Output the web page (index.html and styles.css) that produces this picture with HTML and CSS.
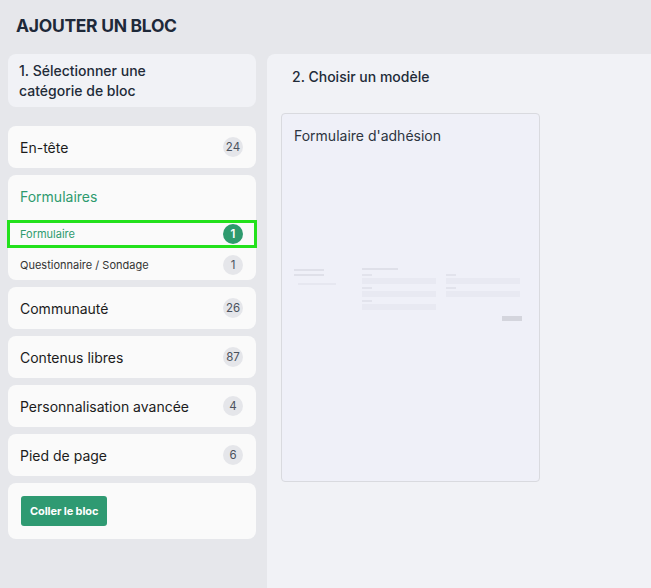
FILE: index.html
```html
<!DOCTYPE html>
<html lang="fr">
<head>
    <meta charset="UTF-8">
    <meta name="viewport" content="width=device-width, initial-scale=1.0">
    <title>Ajouter un bloc</title>
    <link rel="stylesheet" href="styles.css">
</head>
<body>
    <div class="header">
        <h1 class="title">AJOUTER UN BLOC</h1>
    </div>

    <div class="layout">
        <!-- colonne des catégories -->
        <div class="sidebar">
            <div class="step-card">1. Sélectionner une catégorie de bloc</div>

            <div class="cat-card">
                <div class="cat-row">
                    <span>En-tête</span>
                    <span class="badge">24</span>
                </div>
            </div>

            <div class="cat-card">
                <div class="cat-row active">
                    <span>Formulaires</span>
                </div>
                <div class="sub-row selected">
                    <span>Formulaire</span>
                    <span class="badge green">1</span>
                </div>
                <div class="sub-row">
                    <span>Questionnaire / Sondage</span>
                    <span class="badge">1</span>
                </div>
            </div>

            <div class="cat-card">
                <div class="cat-row">
                    <span>Communauté</span>
                    <span class="badge">26</span>
                </div>
            </div>

            <div class="cat-card">
                <div class="cat-row">
                    <span>Contenus libres</span>
                    <span class="badge">87</span>
                </div>
            </div>

            <div class="cat-card">
                <div class="cat-row">
                    <span>Personnalisation avancée</span>
                    <span class="badge">4</span>
                </div>
            </div>

            <div class="cat-card">
                <div class="cat-row">
                    <span>Pied de page</span>
                    <span class="badge">6</span>
                </div>
            </div>

            <div class="cat-card paste">
                <button class="btn">Coller le bloc</button>
            </div>
        </div>

        <!-- modèles -->
        <div class="main">
            <h2 class="main-title">2. Choisir un modèle</h2>

            <div class="template">
                <div class="template-title">Formulaire d'adhésion</div>
                <div class="preview">
                    <div class="pv-left">
                        <div class="pv-line w30"></div>
                        <div class="pv-line w30"></div>
                        <div class="pv-line w38 faint"></div>
                    </div>
                    <div class="pv-form">
                        <div class="pv-line w36"></div>
                        <div class="pv-grid">
                            <div class="pv-field"><div class="pv-label"></div><div class="pv-box"></div></div>
                            <div class="pv-field"><div class="pv-label"></div><div class="pv-box"></div></div>
                            <div class="pv-field"><div class="pv-label"></div><div class="pv-box"></div></div>
                            <div class="pv-field"><div class="pv-label"></div><div class="pv-box"></div></div>
                            <div class="pv-field"><div class="pv-label"></div><div class="pv-box"></div></div>
                        </div>
                        <div class="pv-submit"></div>
                    </div>
                </div>
            </div>
        </div>
    </div>
</body>
</html>
```

FILE: styles.css
```css
* {
    margin: 0;
    padding: 0;
    box-sizing: border-box;
}

body {
    font-family: Inter, 'Noto Sans', sans-serif;
    background: #e6e7eb;
    color: #1c1c1c;
    height: 588px;
    overflow: hidden;
}

.header {
    padding: 15px 16px 0;
    height: 54px;
}

.title {
    font-size: 17.5px;
    font-weight: 700;
    color: #1e2939;
    letter-spacing: -0.3px;
}

.layout {
    display: flex;
    gap: 11px;
    padding-left: 8px;
    height: 534px;
}

.sidebar {
    width: 248px;
    display: flex;
    flex-direction: column;
    gap: 7px;
}

.step-card {
    background: #f1f2f6;
    border-radius: 8px;
    padding: 7px 60px 7px 11px;
    font-size: 14px;
    font-weight: 500;
    line-height: 20px;
    color: #222b38;
    height: 53px;
    margin-bottom: 12px;
}

.cat-card {
    background: #fafafa;
    border-radius: 8px;
}

.cat-row {
    height: 42px;
    display: flex;
    align-items: center;
    justify-content: space-between;
    padding: 0 13px 0 12px;
    font-size: 14px;
}

.cat-row.active {
    color: #2e9a6e;
}

.sub-row {
    height: 26px;
    margin: 3px 0 2px;
    display: flex;
    align-items: center;
    justify-content: space-between;
    padding: 0 13px 0 12px;
    font-size: 11px;
    color: #333;
}

.sub-row.selected {
    color: #2e9a6e;
    outline: 3px solid #23e11c;
    outline-offset: -2px;
    margin-top: 4px;
    margin-bottom: 5px;
}

.badge {
    width: 20px;
    height: 20px;
    border-radius: 50%;
    background: #e5e6ea;
    color: #4b525d;
    font-size: 11.5px;
    display: flex;
    align-items: center;
    justify-content: center;
}

.badge.green {
    background: #2e9a6e;
    color: #fff;
    font-weight: 600;
}

.paste {
    height: 56px;
    padding: 13px;
}

.btn {
    background: #2f9a72;
    color: #fff;
    border: none;
    border-radius: 3px;
    height: 30px;
    padding: 0 9px;
    font-family: inherit;
    font-size: 11px;
    font-weight: 700;
    letter-spacing: -0.1px;
}

.main {
    flex: 1;
    background: #f1f2f6;
    border-radius: 8px 0 0 0;
    padding: 14px 0 0 14px;
}

.main-title {
    font-size: 14px;
    font-weight: 500;
    color: #222b38;
    padding-left: 11px;
    margin-bottom: 28px;
}

.template {
    width: 259px;
    height: 369px;
    background: #eff0f8;
    border: 1px solid #d9dadf;
    border-radius: 4px;
    padding: 13px 12px 0;
}

.template-title {
    font-size: 14px;
    color: #2d3440;
}

/* aperçu flou du modèle */
.preview {
    display: flex;
    gap: 26px;
    margin-top: 124px;
    filter: blur(0.7px);
}

.pv-left {
    width: 42px;
    display: flex;
    flex-direction: column;
    gap: 3px;
    padding-top: 1px;
}

.pv-form {
    flex: 1;
    display: flex;
    flex-direction: column;
}

.pv-line {
    height: 2px;
    background: #dfe0e9;
}

.pv-line.faint {
    background: #e6e7f0;
    margin-top: 4px;
    margin-left: 4px;
}

.w30 { width: 30px; }
.w36 { width: 36px; }
.w38 { width: 38px; }

.pv-grid {
    display: grid;
    grid-template-columns: 74px 74px;
    column-gap: 10px;
    row-gap: 3px;
    margin-top: 4px;
}

.pv-label {
    width: 10px;
    height: 2px;
    background: #e2e3ec;
    margin-bottom: 2px;
}

.pv-box {
    height: 6px;
    background: #e8e9f2;
}

.pv-submit {
    align-self: flex-end;
    width: 20px;
    height: 5px;
    background: #d4d5dd;
    margin: 6px 5px 0 0;
}
```
